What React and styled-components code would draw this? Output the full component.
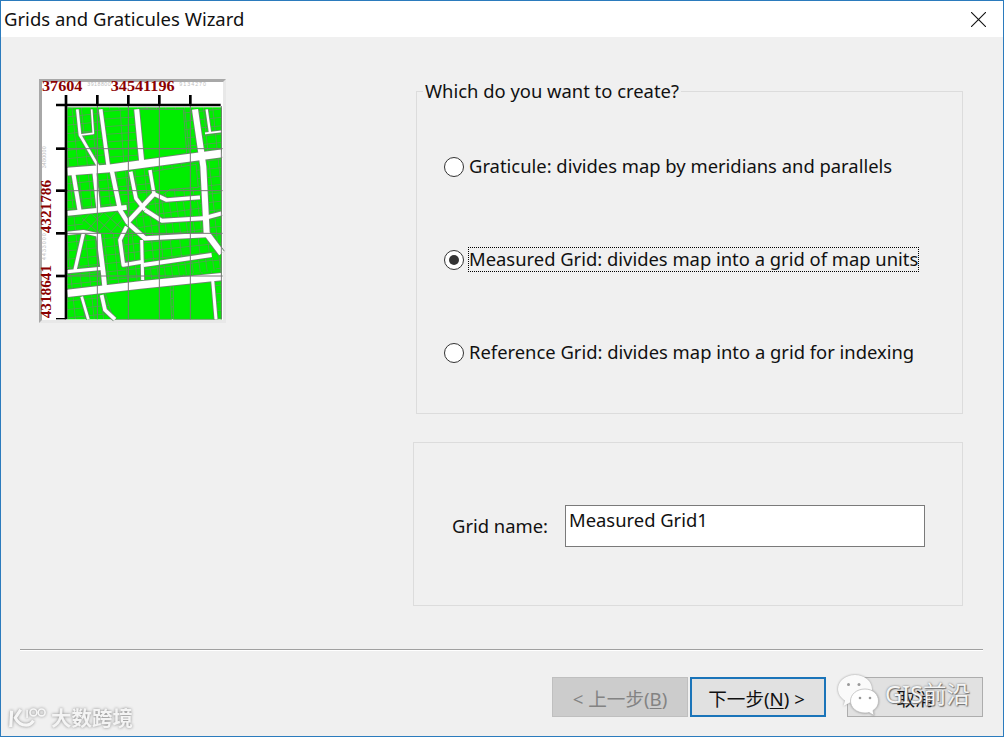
import React from "react";
import styled, { createGlobalStyle } from "styled-components";

const Global = createGlobalStyle`
  html, body { margin: 0; padding: 0; background: #f0f0f0; }
  * { box-sizing: border-box; }
`;

const FONT = `"Noto Sans", "Noto Sans CJK SC", sans-serif`;

const Window = styled.div`
  position: relative;
  width: 1004px;
  height: 737px;
  border: 1px solid #2b7bbd;
  background: #f0f0f0;
  font-family: ${FONT};
  font-size: 18.4px;
  color: #111;
  overflow: hidden;
  display: flex;
  flex-direction: column;
`;
const TitleBar = styled.header`
  height: 36px;
  flex: none;
  background: #fff;
  display: flex;
  align-items: center;
  justify-content: space-between;
  padding: 0 17px 0 3px;
`;
const Title = styled.h1`
  margin: 0;
  font-weight: 400;
  font-size: 18.5px;
  line-height: 36px;
`;
const CloseButton = styled.svg`
  width: 15px;
  height: 15px;
  display: block;
`;
const Main = styled.main`
  display: flex;
  gap: 187px;
  padding: 42px 0 0 38px;
`;
const MapFrame = styled.div`
  width: 187px;
  height: 244px;
  flex: none;
  border: 3px solid;
  border-color: #a8a8a8 #e8e8e8 #e8e8e8 #a8a8a8;
  background: #fff;
`;
const MapSvg = styled.svg`
  display: block;
  width: 181px;
  height: 238px;
  overflow: visible;
`;
const RightColumn = styled.div`
  width: 550px;
  display: flex;
  flex-direction: column;
  gap: 28px;
`;
const ChoiceGroup = styled.fieldset`
  margin: 0 0 0 3px;
  padding: 0;
  min-width: 0;
  height: 335px;
  border: 1px solid #dcdcdc;
`;
const Legend = styled.legend`
  margin-left: 6px;
  padding: 0 2px;
  line-height: 24px;
`;
const RadioList = styled.div`
  display: flex;
  flex-direction: column;
  gap: 68px;
  padding: 51px 0 0 27px;
`;
const RadioRow = styled.label`
  display: flex;
  align-items: center;
  gap: 4px;
  height: 25px;
  white-space: nowrap;
`;
const RadioDot = styled.span`
  width: 20px;
  height: 20px;
  flex: none;
  border-radius: 50%;
  border: 1px solid #333;
  background: #fff;
  display: flex;
  align-items: center;
  justify-content: center;
  &::after {
    content: "";
    width: 10px;
    height: 10px;
    border-radius: 50%;
    background: ${p => (p.$checked ? "#333" : "transparent")};
  }
`;
const RadioText = styled.span`
  height: 25px;
  line-height: 24px;
  padding: 0 1px;
  outline: ${p => (p.$focused ? "1px dotted #000" : "none")};
  outline-offset: -1px;
`;
const NameGroup = styled.section`
  height: 164px;
  border: 1px solid #dcdcdc;
  display: flex;
  align-items: center;
  padding: 4px 0 0 38px;
  gap: 17px;
`;
const NameLabel = styled.label`
  line-height: 24px;
`;
const NameField = styled.div`
  width: 360px;
  height: 42px;
  background: #fff;
  border: 1px solid #7a7a7a;
  padding: 2px 3px;
  line-height: 24px;
`;
const Footer = styled.footer`
  padding: 0 20px 0 19px;
  margin-top: 43px;
`;
const Separator = styled.hr`
  margin: 0;
  height: 2px;
  border: 0;
  border-top: 1px solid #a0a0a0;
  border-bottom: 1px solid #fff;
`;
const ButtonRow = styled.div`
  display: flex;
  justify-content: flex-end;
  margin-top: 26px;
`;
const Button = styled.button`
  width: 136px;
  height: 40px;
  margin-left: ${p => p.$gap || 0}px;
  padding: 0 ${p => (p.$primary ? 3 : 0)}px 0 0;
  font-family: ${FONT};
  font-size: 18.6px;
  border: ${p => (p.$primary ? "2px solid #1a74b9" : "1px solid #adadad")};
  background: ${p => (p.disabled ? "#cccccc" : "#e1e1e1")};
  color: ${p => (p.disabled ? "#838383" : "#111")};
  ${p => p.disabled && "border-color: #bfbfbf;"}
  u { text-underline-offset: 2px; }
`;
const WeChatMark = styled.div`
  position: absolute;
  left: 835px;
  top: 672px;
  display: flex;
  align-items: center;
  gap: 5px;
  pointer-events: none;
`;
const WeChatText = styled.span`
  font-family: ${FONT};
  font-size: 23.5px;
  padding-bottom: 4px;
  color: #f4f4f4;
  text-shadow: 0 0 2px #666, 1px 1px 1px #777;
`;
const BrandMark = styled.div`
  position: absolute;
  left: 7px;
  top: 703px;
  display: flex;
  align-items: center;
  gap: 3px;
  pointer-events: none;
  filter: drop-shadow(0 0 1.5px #888);
`;
const BrandText = styled.span`
  font-family: "Noto Sans CJK SC", sans-serif;
  font-size: 20.5px;
  font-weight: 700;
  color: #f4f4f4;
  line-height: 26px;
`;

const roads = [
  [23, "112,305 240,295 575,250"],
  [22, "112,670 330,645 575,620"],
  [18, "495,118 520,290 530,490 575,550"],
  [14, "112,430 290,412"],
  [13, "290,460 372,372"],
  [13, "295,460 345,505 530,495"],
  [11, "372,372 410,390 510,382"],
  [15, "320,118 335,275"],
  [11, "212,118 235,290"],
  [8, "142,118 150,195 205,290"],
  [5, "185,118 190,190 150,195"],
  [12, "130,310 150,430"],
  [12, "193,305 205,415"],
  [13, "246,305 270,420 295,460"],
  [11, "302,305 318,385 345,420"],
  [10, "360,300 372,372"],
  [12, "345,420 395,452 520,445 575,430"],
  [10, "160,490 135,600"],
  [10, "112,605 215,595"],
  [14, "205,490 220,610 225,660"],
  [10, "112,490 160,485 205,495"],
  [11, "290,470 270,510 280,585 340,575"],
  [9, "335,510 338,630"],
  [12, "340,585 545,555"],
  [11, "215,675 225,720 255,748"],
  [8, "155,680 175,748"],
  [9, "548,630 558,748"],
  [7, "530,118 540,188"],
  [5, "525,190 575,184"],
];

const patches = [
  ["220,118 322,118 335,275 235,290", "long"],
  ["155,430 290,412 296,460 270,490 205,490 160,485", "diag"],
  ["300,465 345,505 520,490 510,395 410,395 372,380", "rise"],
  ["340,585 545,555 560,600 345,630", "rise"],
];

const solids = [
  "322,118 460,118 470,250 338,272",
  "365,305 498,283 505,352 420,358 385,385 372,360",
  "225,668 420,640 425,748 250,748",
  "430,640 545,632 555,748 430,748",
];

const gridX = [202, 295, 388, 481];
const gridY = [236, 362, 490, 618];
const PARCEL = "#6f8570";

function MapPicture() {
  return (
    <MapSvg viewBox="36 36 543 714">
      <defs>
        <pattern id="parcels" width="28" height="25" patternUnits="userSpaceOnUse" patternTransform="rotate(-6)">
          <rect width="28" height="25" fill="#00ee00" />
          <path d="M0 1H28M1 0V25" stroke={PARCEL} strokeWidth="2.200" fill="none" />
        </pattern>
        <pattern id="long" width="52" height="23" patternUnits="userSpaceOnUse" patternTransform="rotate(-4)">
          <rect width="52" height="23" fill="#00ee00" />
          <path d="M0 1H52M1 0V23" stroke={PARCEL} strokeWidth="2.200" fill="none" />
        </pattern>
        <pattern id="diag" width="28" height="28" patternUnits="userSpaceOnUse" patternTransform="rotate(42)">
          <rect width="28" height="28" fill="#00ee00" />
          <path d="M0 1H28M1 0V28" stroke={PARCEL} strokeWidth="2.200" fill="none" />
        </pattern>
        <pattern id="rise" width="21" height="32" patternUnits="userSpaceOnUse" patternTransform="rotate(-8)">
          <rect width="21" height="32" fill="#00ee00" />
          <path d="M0 1H21M1 0V32" stroke={PARCEL} strokeWidth="2.200" fill="none" />
        </pattern>
      </defs>
      <rect x="36" y="36" width="543" height="714" fill="#fff" />
      <rect x="112" y="112" width="464" height="636" fill="url(#parcels)" />
      {patches.map(([p, id]) => (
        <polygon key={p} points={p} fill={`url(#${id})`} />
      ))}
      {solids.map(p => (
        <polygon key={p} points={p} fill="#00ee00" stroke={PARCEL} strokeWidth="2.200" />
      ))}
      {roads.map(([w, p]) => (
        <polyline key={p} points={p} fill="none" stroke={PARCEL} strokeWidth={w + 5} strokeLinejoin="round" />
      ))}
      {roads.map(([w, p]) => (
        <polyline key={`w${p}`} points={p} fill="none" stroke="#fff" strokeWidth={w} strokeLinejoin="round" />
      ))}
      <g stroke="#777" strokeWidth="3">
        {gridX.map(x => <line key={x} x1={x} y1="108" x2={x} y2="748" />)}
        {gridY.map(y => <line key={y} x1="108" y1={y} x2="578" y2={y} />)}
        <line x1="574" y1="108" x2="574" y2="748" />
      </g>
      <g stroke="#000" strokeWidth="8" fill="none">
        <path d="M78 105H572M108 75V748" />
        {gridX.map(x => <line key={x} x1={x} y1="75" x2={x} y2="105" />)}
        {gridY.map(y => <line key={y} x1="78" y1={y} x2="108" y2={y} />)}
        <line x1="78" y1="746" x2="108" y2="746" strokeWidth="4" />
      </g>
      <g fontFamily="Liberation Sans, sans-serif" fontSize="16" fill="#bdbdbd">
        <text x="172" y="47" textLength="70">3918800</text>
        <text x="448" y="47" textLength="80">9134270</text>
        <text transform="translate(49 295) rotate(-90)" textLength="66">3480000</text>
        <text transform="translate(49 570) rotate(-90)" textLength="80">4433000</text>
      </g>
      <g fontFamily="Liberation Serif, serif" fontSize="44" fontWeight="700" fill="#8b0000">
        <text x="36" y="64" textLength="121" lengthAdjust="spacingAndGlyphs">37604</text>
        <text x="242" y="64" textLength="192" lengthAdjust="spacingAndGlyphs">34541196</text>
        <text transform="translate(63 490) rotate(-90)" textLength="160" lengthAdjust="spacingAndGlyphs">4321786</text>
        <text transform="translate(63 745) rotate(-90)" textLength="160" lengthAdjust="spacingAndGlyphs">4318641</text>
      </g>
    </MapSvg>
  );
}

function WeChatIcon() {
  return (
    <svg width="44" height="44" viewBox="0 0 44 44" style={{ filter: "drop-shadow(0 0 1px #999)" }}>
      <path d="M19 2C9 2 2 8.500 2 16c0 5 3 9 7 11.500L7.500 33l6.500-3.500c2 .5 3.500.7 5 .7C29 30.200 36 23.500 36 16 36 8.500 29 2 19 2z" fill="#fafafa" />
      <path d="M29 16c-8.500 0-14.500 5.500-14.500 12S20.500 40 29 40c1.500 0 3-.2 4-.6L38 42.500l-1-5c3.500-2.200 5.500-5.500 5.500-9.500 0-6.500-5.500-12-13.500-12z" fill="#fff" stroke="#bbb" strokeWidth=".8" />
      <g fill="#999">
        <circle cx="12.500" cy="11.500" r="1.500" />
        <circle cx="23" cy="11.500" r="1.500" />
        <circle cx="24" cy="25" r="1.300" />
        <circle cx="34" cy="25" r="1.300" />
      </g>
    </svg>
  );
}

function BrandLogo() {
  return (
    <svg width="40" height="26" viewBox="0 0 44 26" fill="none" stroke="#f6f6f6">
      <path d="M4 6L3 24" strokeWidth="3.500" />
      <path d="M14 5L8 14c2 4 5 8 12 8 4 0 6-2 8-5" strokeWidth="3.500" />
      <path d="M21 5v9" strokeWidth="1.800" />
      <circle cx="28" cy="8" r="3.800" strokeWidth="1.800" />
      <circle cx="37" cy="8" r="3.800" strokeWidth="1.800" />
    </svg>
  );
}

export default function App() {
  return (
    <>
      <Global />
      <Window>
        <TitleBar>
          <Title>Grids and Graticules Wizard</Title>
          <CloseButton viewBox="0 0 15 15">
            <path d="M0 0L15 15M15 0L0 15" stroke="#111" strokeWidth="1.100" fill="none" />
          </CloseButton>
        </TitleBar>
        <Main>
          <MapFrame>
            <MapPicture />
          </MapFrame>
          <RightColumn>
            <ChoiceGroup>
              <Legend>Which do you want to create?</Legend>
              <RadioList>
                <RadioRow>
                  <RadioDot />
                  <RadioText>Graticule: divides map by meridians and parallels</RadioText>
                </RadioRow>
                <RadioRow>
                  <RadioDot $checked />
                  <RadioText $focused>Measured Grid: divides map into a grid of map units</RadioText>
                </RadioRow>
                <RadioRow>
                  <RadioDot />
                  <RadioText>Reference Grid: divides map into a grid for indexing</RadioText>
                </RadioRow>
              </RadioList>
            </ChoiceGroup>
            <NameGroup>
              <NameLabel>Grid name:</NameLabel>
              <NameField>Measured Grid1</NameField>
            </NameGroup>
          </RightColumn>
        </Main>
        <Footer>
          <Separator />
          <ButtonRow>
            <Button disabled>&lt; 上一步(<u>B</u>)</Button>
            <Button $primary $gap={2}>下一步(<u>N</u>) &gt;</Button>
            <Button $gap={21}>取消</Button>
          </ButtonRow>
        </Footer>
        <WeChatMark>
          <WeChatIcon />
          <WeChatText>GIS前沿</WeChatText>
        </WeChatMark>
        <BrandMark>
          <BrandLogo />
          <BrandText>大数跨境</BrandText>
        </BrandMark>
      </Window>
    </>
  );
}
